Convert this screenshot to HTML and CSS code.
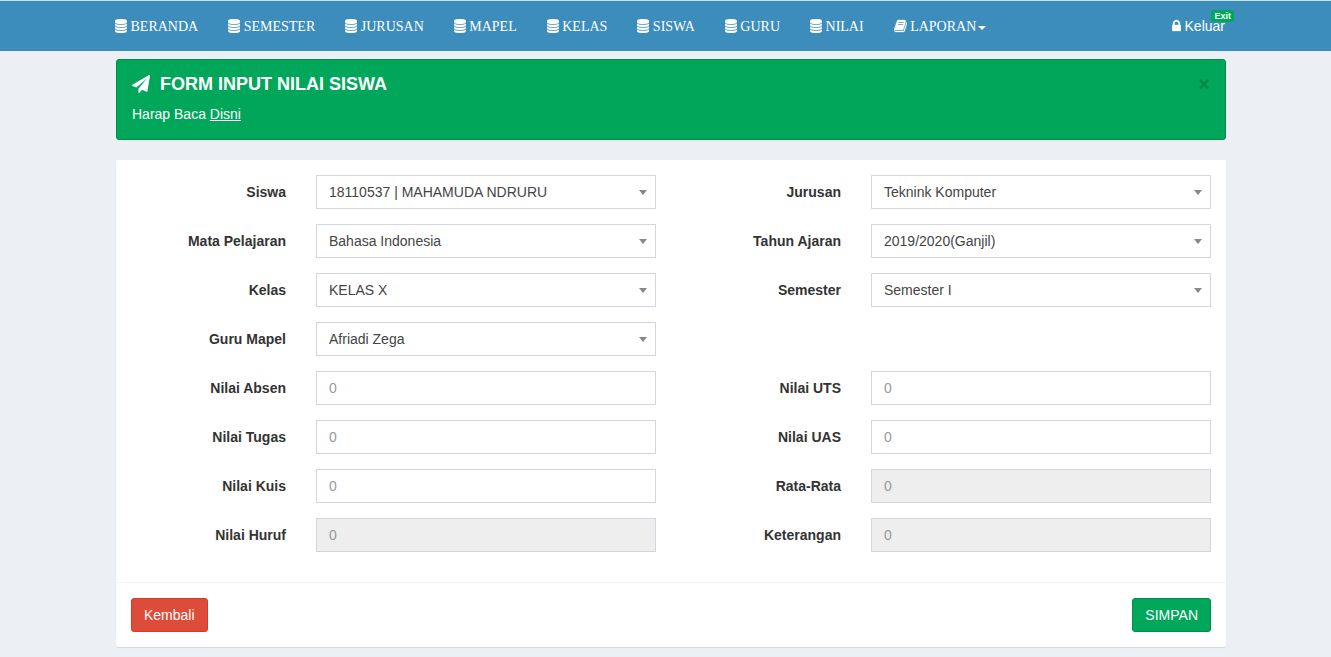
FILE: index.html
```html
<!DOCTYPE html>
<html lang="id">
<head>
<meta charset="utf-8">
<meta name="viewport" content="width=device-width, initial-scale=1">
<title>Form Input Nilai Siswa</title>
<link rel="stylesheet" href="styles.css">
</head>
<body>
<svg width="0" height="0" class="sprite" aria-hidden="true">
  <symbol id="database" viewBox="0 0 1536 1792"><path d="M768 768q237 0 443-43t325-127v170q0 69-103 128t-280 93.500-385 34.500-385-34.500-280-93.500-103-128v-170q119 84 325 127t443 43zm0 768q237 0 443-43t325-127v170q0 69-103 128t-280 93.500-385 34.500-385-34.500-280-93.500-103-128v-170q119 84 325 127t443 43zm0-384q237 0 443-43t325-127v170q0 69-103 128t-280 93.500-385 34.500-385-34.500-280-93.500-103-128v-170q119 84 325 127t443 43zm0-1152q208 0 385 34.500t280 93.500 103 128v128q0 69-103 128t-280 93.500-385 34.500-385-34.500-280-93.500-103-128v-128q0-69 103-128t280-93.500 385-34.500z"/></symbol>
  <symbol id="book" viewBox="64 0 1664 1792"><path d="M1703 478q40 57 18 129l-275 906q-19 64-76.500 107.500t-122.500 43.500h-923q-77 0-148.500-53.500t-99.500-131.500q-24-67-2-127 0-4 3-27t4-37q1-8-3-21.500t-3-19.500q2-11 8-21t16.500-23.500 16.500-23.500q23-38 45-91.500t30-91.500q3-10 .5-30t-.5-28q3-11 17-28t17-23q21-36 42-92t25-90q1-9-2.500-32t.5-28q4-13 22-30.500t22-22.500q19-26 42.500-84.500t27.500-96.500q1-8-3-25.500t-2-26.500q2-8 9-18t18-23 17-21q8-12 16.500-30.500t15-35 16-36 19.500-32 26.500-23.500 36-11.500 47.500 5.500l-1 3q38-9 51-9h761q74 0 114 56t18 130l-274 906q-36 119-71.500 153.500t-128.500 34.500h-869q-27 0-38 15-11 16-1 43 24 70 144 70h923q29 0 56-15.500t35-41.500l300-987q7-22 5-57 38 15 59 43zm-1064 2q-4 13 2 22.500t20 9.500h608q13 0 25.500-9.500t16.500-22.500l21-64q4-13-2-22.500t-20-9.500h-608q-13 0-25.500 9.500t-16.500 22.500zm-83 256q-4 13 2 22.500t20 9.500h608q13 0 25.500-9.500t16.500-22.500l21-64q4-13-2-22.500t-20-9.500h-608q-13 0-25.500 9.500t-16.500 22.500z"/></symbol>
  <symbol id="lock" viewBox="320 0 1152 1792"><path d="M640 768h512v-192q0-106-75-181t-181-75-181 75-75 181v192zm832 96v576q0 40-28 68t-68 28h-960q-40 0-68-28t-28-68v-576q0-40 28-68t68-28h32v-192q0-184 132-316t316-132 316 132 132 316v192h32q40 0 68 28t28 68z"/></symbol>
  <symbol id="plane" viewBox="0 0 1792 1792"><path d="M1764 11q33 24 27 64l-256 1536q-5 29-32 45-14 8-31 8-11 0-24-5l-453-185-242 295q-18 23-49 23-13 0-22-4-19-7-30.500-23.500t-11.500-36.500v-349l864-1059-1069 925-395-162q-37-14-40-55-2-40 32-59l1664-960q15-9 32-9 20 0 36 11z"/></symbol>
</svg>

<header class="navbar">
  <div class="container navbar-inner">
    <nav class="menu">
      <a href="#"><svg class="icon"><use href="#database"/></svg> BERANDA</a>
      <a href="#"><svg class="icon"><use href="#database"/></svg> SEMESTER</a>
      <a href="#"><svg class="icon"><use href="#database"/></svg> JURUSAN</a>
      <a href="#"><svg class="icon"><use href="#database"/></svg> MAPEL</a>
      <a href="#"><svg class="icon"><use href="#database"/></svg> KELAS</a>
      <a href="#"><svg class="icon"><use href="#database"/></svg> SISWA</a>
      <a href="#"><svg class="icon"><use href="#database"/></svg> GURU</a>
      <a href="#"><svg class="icon"><use href="#database"/></svg> NILAI</a>
      <a href="#"><svg class="icon icon-book"><use href="#book"/></svg> LAPORAN<span class="caret"></span></a>
    </nav>
    <a class="logout" href="#"><svg class="icon icon-lock"><use href="#lock"/></svg> Keluar<span class="badge">Exit</span></a>
  </div>
</header>

<main class="content">
  <div class="container">
    <section class="alert">
      <div>
        <h1 class="alert-title"><svg class="icon-plane"><use href="#plane"/></svg>FORM INPUT NILAI SISWA</h1>
        <p class="alert-text">Harap Baca <a href="#">Disni</a></p>
      </div>
      <button class="close" type="button" aria-label="Tutup">×</button>
    </section>

    <form class="box">
      <div class="fields">
        <div class="field"><label for="siswa">Siswa</label><div class="select"><select id="siswa"><option>18110537 | MAHAMUDA NDRURU</option></select></div></div>
        <div class="field"><label for="jurusan">Jurusan</label><div class="select"><select id="jurusan"><option>Teknink Komputer</option></select></div></div>
        <div class="field"><label for="mapel">Mata Pelajaran</label><div class="select"><select id="mapel"><option>Bahasa Indonesia</option></select></div></div>
        <div class="field"><label for="tahun">Tahun Ajaran</label><div class="select"><select id="tahun"><option>2019/2020(Ganjil)</option></select></div></div>
        <div class="field"><label for="kelas">Kelas</label><div class="select"><select id="kelas"><option>KELAS X</option></select></div></div>
        <div class="field"><label for="semester">Semester</label><div class="select"><select id="semester"><option>Semester I</option></select></div></div>
        <div class="field"><label for="guru">Guru Mapel</label><div class="select"><select id="guru"><option>Afriadi Zega</option></select></div></div>
        <div class="field field-first"><label for="absen">Nilai Absen</label><input id="absen" type="text" placeholder="0"></div>
        <div class="field"><label for="uts">Nilai UTS</label><input id="uts" type="text" placeholder="0"></div>
        <div class="field"><label for="tugas">Nilai Tugas</label><input id="tugas" type="text" placeholder="0"></div>
        <div class="field"><label for="uas">Nilai UAS</label><input id="uas" type="text" placeholder="0"></div>
        <div class="field"><label for="kuis">Nilai Kuis</label><input id="kuis" type="text" placeholder="0"></div>
        <div class="field"><label for="rata">Rata-Rata</label><input id="rata" type="text" placeholder="0" readonly></div>
        <div class="field"><label for="huruf">Nilai Huruf</label><input id="huruf" type="text" placeholder="0" readonly></div>
        <div class="field"><label for="keterangan">Keterangan</label><input id="keterangan" type="text" placeholder="0" readonly></div>
      </div>
      <div class="box-footer">
        <button class="btn btn-danger" type="button">Kembali</button>
        <button class="btn btn-success" type="submit">SIMPAN</button>
      </div>
    </form>
  </div>
</main>
</body>
</html>
```
FILE: styles.css
```css
* {
  box-sizing: border-box;
}

body {
  margin: 0;
  background: #ecf0f5;
  color: #333;
  font-family: "Liberation Sans", Arial, sans-serif;
  font-size: 14px;
  line-height: 20px;
}

input,
select,
button {
  font: inherit;
}

.sprite {
  position: absolute;
}

.container {
  width: calc(100% - 32px);
  max-width: 1110px;
  margin: 0 auto;
}

.navbar {
  padding-left: 11px;
  border-top: 1px solid #c5e0f0;
  background: #3c8dbc;
}

.navbar-inner {
  display: flex;
  justify-content: space-between;
}

.menu {
  display: flex;
  flex-wrap: wrap;
  margin-left: -16px;
  font-family: "Liberation Serif", "Times New Roman", serif;
}

.menu a,
.logout {
  padding: 15px;
  color: #fff;
  text-decoration: none;
  white-space: nowrap;
}

.menu a {
  padding: 16px 15px 14px;
}

.icon {
  width: 12px;
  height: 14px;
  overflow: visible;
  fill: currentColor;
  stroke: currentColor;
  stroke-width: 40px;
  vertical-align: -2px;
}

.menu .icon-book {
  width: 13px;
}

.logout {
  position: relative;
  padding-right: 1px;
}

.icon-lock {
  width: 9px;
}

.badge {
  position: absolute;
  top: 9px;
  right: -8px;
  padding: 1px 3px;
  border-radius: 3px;
  background: #00a65a;
  font-size: 9px;
  font-weight: bold;
  line-height: 10px;
}

.caret,
.select::after {
  border: 4px solid transparent;
  border-top-color: currentColor;
  border-bottom: 0;
}

.caret {
  display: inline-block;
  margin-left: 2px;
  vertical-align: middle;
}

.content {
  padding: 8px 0 10px 11px;
}

.alert {
  display: flex;
  justify-content: space-between;
  align-items: flex-start;
  margin-bottom: 20px;
  padding: 14px 15px 15px;
  border: 1px solid #008d4c;
  border-radius: 3px;
  background: #00a65a;
  color: #fff;
}

.alert-title {
  display: flex;
  align-items: center;
  gap: 10px;
  margin: 0 0 10px;
  font-size: 18px;
  line-height: 20px;
}

.icon-plane {
  width: 18px;
  height: 18px;
  fill: currentColor;
}

.alert-text {
  margin: 0;
}

.alert-text a {
  color: inherit;
}

.close {
  padding: 0;
  border: 0;
  background: none;
  color: #000;
  font-size: 20px;
  font-weight: bold;
  line-height: 20px;
  opacity: 0.2;
}

.box {
  border-radius: 0 0 3px 3px;
  background: #fff;
  box-shadow: 0 1px 1px rgba(0, 0, 0, 0.1);
}

.fields {
  display: grid;
  grid-template-columns: 1fr 1fr;
  row-gap: 15px;
  padding: 15px 0 30px;
}

.field {
  display: grid;
  grid-template-columns: 1fr 2fr;
  column-gap: 30px;
  align-items: center;
  padding-right: 15px;
}

.field-first {
  grid-column: 1;
}

.field label {
  font-weight: bold;
  text-align: right;
}

.field input,
.field select {
  width: 100%;
  height: 34px;
  padding: 6px 12px;
  border: 1px solid #d2d6de;
  border-radius: 0;
  background: #fff;
  color: #444;
  appearance: none;
}

.field input::placeholder {
  color: #999;
  opacity: 1;
}

.field input:read-only {
  background: #eee;
}

.select {
  display: grid;
  align-items: center;
}

.select select,
.select::after {
  grid-area: 1 / 1;
}

.select::after {
  content: "";
  justify-self: end;
  margin-right: 9px;
  border-top-width: 5px;
  color: #888;
  pointer-events: none;
}

.box-footer {
  display: flex;
  justify-content: space-between;
  padding: 15px;
  border-top: 1px solid #f4f4f4;
}

.btn {
  padding: 6px 12px;
  border: 1px solid;
  border-radius: 3px;
  color: #fff;
}

.btn-danger {
  border-color: #d73925;
  background: #dd4b39;
}

.btn-success {
  border-color: #008d4c;
  background: #00a65a;
}
```
